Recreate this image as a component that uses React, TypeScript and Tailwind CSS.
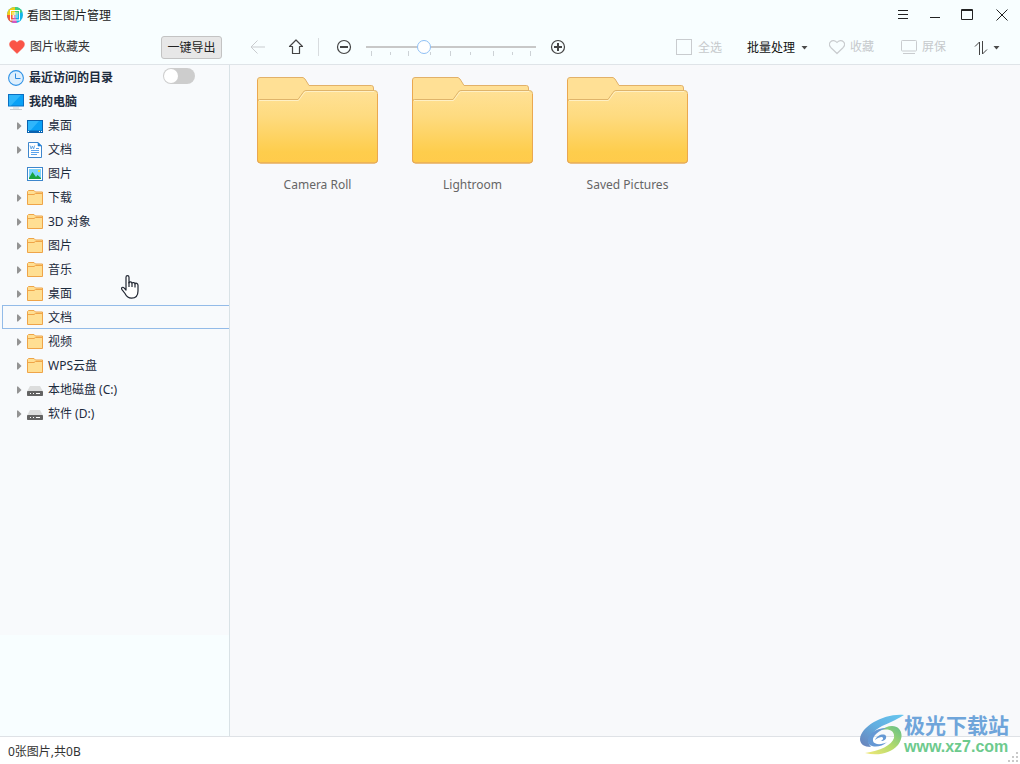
import { useState } from 'react';

type IconName = 'desktop' | 'document' | 'picture' | 'folder' | 'drive';

const treeItems: { name: string; icon: IconName; leaf?: boolean }[] = [
  { name: '桌面', icon: 'desktop' },
  { name: '文档', icon: 'document' },
  { name: '图片', icon: 'picture', leaf: true },
  { name: '下载', icon: 'folder' },
  { name: '3D 对象', icon: 'folder' },
  { name: '图片', icon: 'folder' },
  { name: '音乐', icon: 'folder' },
  { name: '桌面', icon: 'folder' },
  { name: '文档', icon: 'folder' },
  { name: '视频', icon: 'folder' },
  { name: 'WPS云盘', icon: 'folder' },
  { name: '本地磁盘 (C:)', icon: 'drive' },
  { name: '软件 (D:)', icon: 'drive' },
];

const folders = ['Camera Roll', 'Lightroom', 'Saved Pictures'];

function AppLogo() {
  return (
    <svg className="h-4 w-4" viewBox="0 0 16 16">
      <circle cx="8" cy="8" r="8" fill="#12b5e8" />
      <path d="M8 8V0a8 8 0 0 0-8 8z" fill="#f0cf16" />
      <path d="M8 8V0a8 8 0 0 1 7.4 5z" fill="#45cf7c" />
      <path d="M8 8H0a8 8 0 0 0 5 7.4z" fill="#f4593c" />
      <path d="M8 8 5 15.4a8 8 0 0 0 5 .4z" fill="#d955c0" />
      <rect x="3.5" y="3.5" width="9" height="9.5" fill="none" stroke="#fff" />
      <path d="M5 6h6M5 8h6M5 10h6M8 5v3M6.500 8v3" stroke="#fff" strokeWidth="0.8" fill="none" />
    </svg>
  );
}

function HeartIcon({ filled }: { filled?: boolean }) {
  return (
    <svg className="h-4 w-4" viewBox="0 0 16 16">
      <path
        d="M8 14.5 2 8.7C.2 6.8.1 4.3 1.5 2.8 3.2 1 6.2 1.1 8 3.5 9.800 1.100 12.800 1 14.500 2.800 15.900 4.300 15.800 6.800 14 8.700z"
        fill={filled ? '#fa5447' : 'none'}
        stroke={filled ? '#fa5447' : '#c9cccf'}
        strokeWidth={filled ? 0.5 : 1.2}
        strokeLinejoin="round"
      />
    </svg>
  );
}

function ClockIcon() {
  return (
    <svg className="h-4 w-4" viewBox="0 0 16 16" fill="none">
      <circle cx="8" cy="8" r="7.4" fill="#deeffd" stroke="#2f92e6" strokeWidth="1.1" />
      <path d="M7.5 3.5V8.5H12.5" stroke="#2f8be0" />
    </svg>
  );
}

function ComputerIcon() {
  return (
    <svg className="h-4 w-4" viewBox="0 0 16 16">
      <rect x="0.5" y="0.5" width="15" height="11.5" fill="#0aa1f6" stroke="#0a6fc2" />
      <path d="M1 1h12L3 11.5H1z" fill="#2fb6fb" />
      <path d="M5 14h6M2 15.500h12" stroke="#c9ced2" />
    </svg>
  );
}

function TreeIcon({ name }: { name: IconName }) {
  if (name === 'desktop') {
    return (
      <svg className="h-4 w-4" viewBox="0 0 16 16">
        <rect x="0.5" y="2.5" width="15" height="12" fill="#0aa1f6" stroke="#0a62b0" />
        <path d="M1 3h11L3 13H1z" fill="#2fb6fb" />
        <path d="M0 13.5h16" stroke="#0a62b0" strokeWidth="2" />
        <path d="M1 13.5h1M12 13.5h1M14 13.5h1" stroke="#fff" />
      </svg>
    );
  }
  if (name === 'document') {
    return (
      <svg className="h-4 w-4" viewBox="0 0 16 16">
        <path d="M1.5.5h9.5l3.5 3.5v11.5h-13z" fill="#fff" stroke="#3e86cc" />
        <path d="M11 .5v3.5h3.5z" fill="#1f7fd8" stroke="#1f7fd8" strokeWidth="0.6" />
        <path d="M3 3.5 4.2 7 5.4 4 6.6 7 7.7 3.5" fill="none" stroke="#5a9fe0" strokeWidth="0.9" />
        <path d="M9 6.5h3M4 8.5h8M4 10.5h8M4 12.5h6" stroke="#5aa3ec" />
      </svg>
    );
  }
  if (name === 'picture') {
    return (
      <svg className="h-4 w-4" viewBox="0 0 16 16">
        <rect x="0.5" y="1.5" width="15" height="13" fill="#fff" stroke="#3e86cc" />
        <rect x="2" y="3" width="12" height="10" fill="#7cd3fb" />
        <path d="m2 12 3.500-6L9 11l1.500-2L14 12v1H2z" fill="#1aa53f" />
        <rect x="11" y="4" width="2" height="2" fill="#f3e13c" />
      </svg>
    );
  }
  if (name === 'drive') {
    return (
      <svg className="h-4 w-4" viewBox="0 0 16 16">
        <path d="M3 4h10l3 5.500H0z" fill="#dcdddd" />
        <rect y="9" width="16" height="5" rx="0.8" fill="#636363" />
        <path d="M3 11.500h1M6 11.500h1M9 11.500h4" stroke="#fff" />
      </svg>
    );
  }
  return (
    <svg className="h-4 w-4" viewBox="0 0 16 16">
      <path d="M.5 14.5V1.5L1.5.5H7l1.5 1.5h7v12.500z" fill="#ffdf93" stroke="#efa448" />
      <path d="M.5 4.500h6.500l1.500-1h7" fill="none" stroke="#efa448" />
    </svg>
  );
}

function FolderArt() {
  return (
    <svg className="h-[87px] w-[121px]" viewBox="0 0 121 87">
      <defs>
        <linearGradient id="folderFront" x1="0" y1="0" x2="0" y2="1">
          <stop offset="0" stopColor="#ffe196" />
          <stop offset="0.35" stopColor="#fedb80" />
          <stop offset="0.85" stopColor="#fecd4c" />
          <stop offset="1" stopColor="#ffcb4b" />
        </linearGradient>
      </defs>
      <path
        d="M.5 83V3Q.5.5 3 .5H46L48 2l4 6.500H114.500q2 0 2 2.500V83z"
        fill="#ffe095"
        stroke="#e2b169"
      />
      <path
        d="M.5 83V24.500Q.5 22.500 2.500 22.500H41L46 15.500q1-2 3-2H117.500q3 0 3 3V83q0 3-3 3H3.500q-3 0-3-3z"
        fill="url(#folderFront)"
        stroke="#dfb46a"
      />
      <path d="M2 23.500H41.500L47 16q1-1.500 2.500-1.500H117" fill="none" stroke="#fff0c4" />
      <path d="M.5 3V83q0 3 3 3h114q3 0 3-3V17" fill="none" stroke="#eaa850" />
    </svg>
  );
}

function Caret() {
  return (
    <svg className="h-1 w-[7px]" viewBox="0 0 7 4">
      <path d="M.5 0h6l-3 3.500z" fill="#4b4b4b" />
    </svg>
  );
}

function TitleBar() {
  return (
    <header className="flex h-[30px] items-center justify-between">
      <div className="flex items-center gap-1 pl-[7px]">
        <AppLogo />
        <h1 className="pt-0.5 text-xs text-[#222]">看图王图片管理</h1>
      </div>
      <div className="flex text-[#222]">
        <button aria-label="菜单" className="flex h-[30px] w-8 items-center justify-center">
          <svg className="h-3 w-3" viewBox="0 0 12 12" stroke="currentColor">
            <path d="M1 1.500h10M1 5.500h10M1 9.500h10" />
          </svg>
        </button>
        <button aria-label="最小化" className="flex h-[30px] w-8 items-center justify-center">
          <svg className="h-3 w-3" viewBox="0 0 12 12" stroke="currentColor">
            <path d="M1 8.500h10" />
          </svg>
        </button>
        <button aria-label="最大化" className="flex h-[30px] w-8 items-center justify-center">
          <svg className="h-3 w-3" viewBox="0 0 12 12" stroke="currentColor" fill="none">
            <path d="M.5.5h11v10H.5zM0 1.500h12" />
          </svg>
        </button>
        <button aria-label="关闭" className="flex h-[30px] w-[37px] items-center justify-center">
          <svg className="h-3 w-3" viewBox="0 0 12 12" stroke="currentColor">
            <path d="m.5.5 11 11M11.5.5l-11 11" />
          </svg>
        </button>
      </div>
    </header>
  );
}

function Toolbar() {
  const [size, setSize] = useState(33);

  return (
    <div className="flex h-[35px] items-center border-b border-[#dfe4e8]">
      <div className="flex w-[230px] items-center justify-between pr-2 pl-[9px]">
        <div className="flex items-center gap-[5px] text-[#333]">
          <HeartIcon filled />
          图片收藏夹
        </div>
        <button className="h-[23px] w-[61px] rounded-[3px] border border-[#c3c3c3] bg-[#e7e7e7] pt-px text-[#222]">
          一键导出
        </button>
      </div>

      <div className="flex flex-1 items-center pl-5">
        <button aria-label="后退" disabled>
          <svg className="h-4 w-4" viewBox="0 0 16 16" fill="none" stroke="#c9cccf">
            <path d="M15 8H1M7.500 1.500 1 8l6.500 6.500" />
          </svg>
        </button>
        <button aria-label="上一级" className="ml-[22px]">
          <svg className="h-4 w-4" viewBox="0 0 16 16" fill="none" stroke="#444" strokeWidth="1.2">
            <path d="M8 1 1.500 7.500H4.500V14.500h7V7.500h3z" strokeLinejoin="round" />
          </svg>
        </button>
        <div className="ml-3.5 h-[18px] w-px bg-[#d8dcdf]" />
        <button aria-label="缩小" className="ml-[17px]">
          <svg className="h-4 w-4" viewBox="0 0 16 16" fill="none" stroke="#444">
            <circle cx="8" cy="8" r="6.5" strokeWidth="1.2" />
            <path d="M4 8h8" strokeWidth="2" />
          </svg>
        </button>
        <div className="relative ml-3.5 w-[170px]">
          <svg className="absolute top-3 left-0 h-[5px] w-[170px]" viewBox="0 0 170 5" stroke="#cdd2d6">
            <path d="M5.5 0v5M42.5 0v5M84.5 0v5M127.5 0v5M164.5 0v5M24.5 1v3M64.5 1v3M104.5 1v3M146.5 1v3" />
          </svg>
          <input
            type="range"
            aria-label="缩略图大小"
            value={size}
            onChange={(e) => setSize(Number(e.target.value))}
            className="relative block h-4 w-full appearance-none bg-transparent [&::-webkit-slider-runnable-track]:h-0.5 [&::-webkit-slider-runnable-track]:bg-[#c8c8c8] [&::-webkit-slider-thumb]:-mt-1.5 [&::-webkit-slider-thumb]:h-3.5 [&::-webkit-slider-thumb]:w-3.5 [&::-webkit-slider-thumb]:appearance-none [&::-webkit-slider-thumb]:rounded-full [&::-webkit-slider-thumb]:border [&::-webkit-slider-thumb]:border-[#8fc0f5] [&::-webkit-slider-thumb]:bg-white"
          />
        </div>
        <button aria-label="放大" className="ml-3.5">
          <svg className="h-4 w-4" viewBox="0 0 16 16" fill="none" stroke="#444">
            <circle cx="8" cy="8" r="6.5" strokeWidth="1.2" />
            <path d="M4 8h8M8 4v8" strokeWidth="2" />
          </svg>
        </button>
      </div>

      <div className="flex items-center pr-5 text-[#c6c9cc]">
        <label className="flex items-center gap-1.5">
          <input
            type="checkbox"
            disabled
            className="h-4 w-4 appearance-none border border-[#c9cccf] bg-transparent"
          />
          <span className="pt-0.5">全选</span>
        </label>
        <button className="ml-[25px] flex items-center gap-1.5 pt-0.5 text-[#111]">
          批量处理
          <Caret />
        </button>
        <button disabled className="ml-[21px] flex items-center gap-[5px]">
          <HeartIcon />
          收藏
        </button>
        <button disabled className="ml-[27px] flex items-center gap-[5px]">
          <svg className="h-4 w-4" viewBox="0 0 16 16" fill="none" stroke="#c9cccf">
            <rect x="0.5" y="1.5" width="15" height="10.5" rx="0.8" />
            <path d="M2 14.500h12" />
          </svg>
          屏保
        </button>
        <button aria-label="排序" className="ml-7 flex items-center gap-[5px] pt-0.5">
          <svg className="h-3.5 w-3.5" viewBox="0 0 14 14" fill="none" stroke="#444">
            <path d="M5.500 14V1L1 5.500M8.500 0v13l4.500-4.500" />
          </svg>
          <Caret />
        </button>
      </div>
    </div>
  );
}

function Sidebar() {
  const [selected, setSelected] = useState(8);
  const [showRecent, setShowRecent] = useState(false);

  return (
    <aside className="flex w-[230px] flex-col border-r border-[#d9e2e6]">
      <nav className="flex-1 bg-[#f8fafc] text-[#1d2b3d]">
        <div className="flex h-6 items-center justify-between pt-0.5 pr-[34px] pl-2 font-bold">
          <div className="flex items-center gap-[5px]">
            <ClockIcon />
            最近访问的目录
          </div>
          <input
            type="checkbox"
            role="switch"
            aria-label="显示最近访问的目录"
            checked={showRecent}
            onChange={() => setShowRecent(!showRecent)}
            className="mb-1 flex h-4 w-8 appearance-none items-center rounded-full bg-[#cdcdcd] px-px before:h-3.5 before:w-3.5 before:rounded-full before:bg-white checked:justify-end checked:bg-[#2f92e6]"
          />
        </div>
        <div className="flex h-6 items-center gap-[5px] pt-0.5 pl-2 font-bold">
          <ComputerIcon />
          我的电脑
        </div>
        <ul className="pl-0.5">
          {treeItems.map((item, i) => (
            <li key={i}>
              <button
                onClick={() => setSelected(i)}
                className={`flex h-6 w-full items-center border-y border-l pt-0.5 pl-3.5 ${
                  selected === i ? 'border-[#93bbe8]' : 'border-transparent'
                }`}
              >
                <span className="flex w-2.5">
                  {!item.leaf && (
                    <svg className="h-2 w-[5px]" viewBox="0 0 5 8">
                      <path d="M0 .5h1L4.500 4 1 7.500H0z" fill="#939393" />
                    </svg>
                  )}
                </span>
                <TreeIcon name={item.icon} />
                <span className="ml-[5px]">{item.name}</span>
              </button>
            </li>
          ))}
        </ul>
      </nav>
      <div className="h-[101px]" />
    </aside>
  );
}

function Watermark() {
  return (
    <div className="pointer-events-none absolute right-[11px] bottom-[7px] flex items-center">
      <svg className="h-[42px] w-11" viewBox="0 0 44 42">
        <defs>
          <linearGradient id="swirlBlue" x1="0" y1="1" x2="1" y2="0">
            <stop offset="0" stopColor="#6a80b8" />
            <stop offset="0.5" stopColor="#62aee0" />
            <stop offset="1" stopColor="#66c7ef" />
          </linearGradient>
          <linearGradient id="swirlGreen" x1="0" y1="1" x2="1" y2="0">
            <stop offset="0" stopColor="#f3e87a" />
            <stop offset="0.5" stopColor="#b5db6b" />
            <stop offset="1" stopColor="#62bf8a" />
          </linearGradient>
        </defs>
        <path d="M44 1C25-1 1 12 0 25c0 5 4 8 11 8C5 27 11 18 22 12 31 8 38 5 44 1z" fill="url(#swirlBlue)" />
        <path d="M21 16c9-2 14 1 13 8C32 31 20 37 5 39c12 3 25 1 33-8C45 22 41 12 32 12c-4 0-8 2-11 4z" fill="url(#swirlGreen)" />
        <path d="M27 14C14 14 7 22 8 28c1 6 13 6 19 0-5 3-13 3-14-1C12 22 19 16 27 14z" fill="#6598d4" />
        <path d="M15 26c2-5 9-7 11-4 1 3-2 5-5 5 2-1 3-3 1-4-2 0-5 1-7 3z" fill="#6598d4" />
      </svg>
      <div className="flex flex-col">
        <span className="text-[21px] leading-6 font-bold text-[#6fa5da]">极光下载站</span>
        <span className="font-['Liberation_Sans',Arial,sans-serif] text-base leading-5 font-bold text-[#6dca8d]">
          www.xz7.com
        </span>
      </div>
    </div>
  );
}

function HandCursor() {
  return (
    <svg className="pointer-events-none absolute top-[275px] left-[121px] h-6 w-[18px]" viewBox="0 0 18 24">
      <path
        d="M5 15V2.200c0-2 3-2 3 0V8c.3-1.500 2.700-1.500 3 .3.500-1.200 2.700-1 3 .5.600-1 3-.7 3 1.400V16c0 4-2 7.200-6.500 7.200-3.500 0-5-1.700-6.500-4.700L.8 14.300c-.8-1.600 1-2.700 2.200-1.500z"
        fill="#fff"
        stroke="#1f2430"
        strokeWidth="1.2"
        strokeLinejoin="round"
      />
      <path d="M8 7v5M11 8.500V12M14 9v3.500" stroke="#1f2430" strokeWidth="1.2" />
    </svg>
  );
}

export default function App() {
  return (
    <div className="relative flex min-h-screen flex-col bg-[#f8feff] font-['Noto_Sans','Noto_Sans_CJK_SC',sans-serif] text-xs">
      <TitleBar />
      <Toolbar />

      <div className="flex flex-1">
        <Sidebar />
        <main className="flex-1 bg-[#f8f9fb] pt-3 pl-2.5">
          <ul className="flex flex-wrap">
            {folders.map((name) => (
              <li key={name} className="w-[155px]">
                <button className="flex w-full flex-col items-center gap-[13px] text-[#666]">
                  <FolderArt />
                  <span>{name}</span>
                </button>
              </li>
            ))}
          </ul>
        </main>
      </div>

      <footer className="flex h-7 items-center justify-between border-t border-[#dfe2e6] bg-white pr-0.5 pl-2 text-[#333]">
        <span className="pt-0.5">0张图片,共0B</span>
        <svg className="mt-3 h-2.5 w-2.5" viewBox="0 0 10 10" fill="#c9c9c9">
          <path d="M8 0h2v2H8zM4 4h2v2H4zM8 4h2v2H8zM0 8h2v2H0zM4 8h2v2H4zM8 8h2v2H8z" />
        </svg>
      </footer>

      <Watermark />
      <HandCursor />
    </div>
  );
}
